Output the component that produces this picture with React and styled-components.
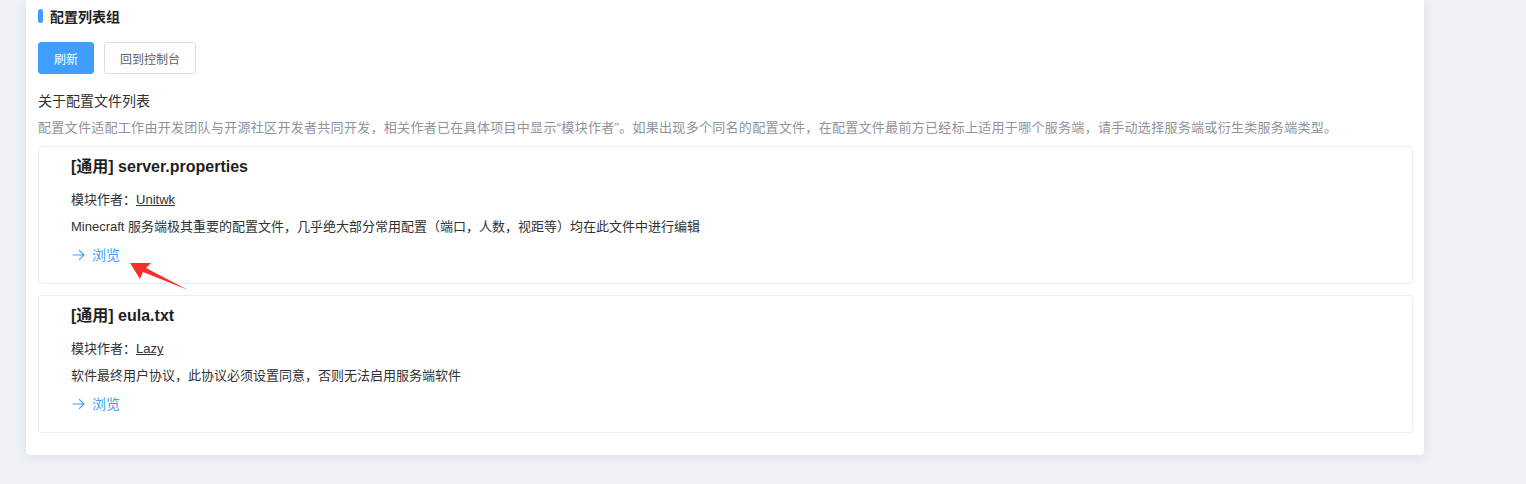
import React from 'react';
import styled, { createGlobalStyle } from 'styled-components';

const GlobalStyle = createGlobalStyle`
  html, body {
    margin: 0;
    padding: 0;
    background: #eef1f5;
    font-family: "Liberation Sans", "Noto Sans CJK SC", sans-serif;
    color: #303133;
  }
`;

const Page = styled.div`
  position: relative;
  width: 1526px;
  height: 484px;
  overflow: hidden;
`;

const Panel = styled.div`
  margin-left: 26px;
  width: 1398px;
  box-sizing: border-box;
  padding: 7px 11px 22px 12px;
  background: #fff;
  border-radius: 0 0 4px 4px;
  box-shadow: 0 2px 12px 0 rgba(0, 0, 0, 0.08);
`;

const Header = styled.div`
  display: flex;
  align-items: center;
  gap: 7px;
  height: 18px;
`;

const Bar = styled.span`
  width: 5px;
  height: 14px;
  border-radius: 3px;
  background: #409eff;
`;

const Title = styled.h3`
  margin: 0;
  font-size: 14px;
  font-weight: 700;
  color: #1f1f1f;
`;

const Toolbar = styled.div`
  display: flex;
  gap: 10px;
  margin-top: 17px;
`;

const Button = styled.button`
  height: 32px;
  padding: 0 15px;
  font-family: inherit;
  font-size: 12px;
  border-radius: 3px;
  cursor: pointer;
  border: 1px solid ${(p) => (p.primary ? '#409eff' : '#dcdfe6')};
  background: ${(p) => (p.primary ? '#409eff' : '#fff')};
  color: ${(p) => (p.primary ? '#fff' : '#606266')};
`;

const SubTitle = styled.div`
  margin-top: 17px;
  font-size: 14px;
  line-height: 20px;
  color: #303133;
`;

const Desc = styled.div`
  margin-top: 7px;
  font-size: 13px;
  letter-spacing: 0.3px;
  line-height: 20px;
  color: #909399;
  white-space: nowrap;
`;

const List = styled.div`
  display: flex;
  flex-direction: column;
  gap: 11px;
  margin-top: 8px;
`;

const Card = styled.div`
  border: 1px solid #ebeef5;
  border-radius: 4px;
  padding: 9px 20px 18px 32px;
`;

const CardTitle = styled.div`
  font-size: 16px;
  font-weight: 700;
  line-height: 22px;
  color: #1f1f1f;
`;

const Meta = styled.div`
  margin-top: ${(p) => p.gap}px;
  font-size: 13px;
  line-height: 20px;
  color: #303133;
`;

const Author = styled.a`
  color: #303133;
  text-decoration: underline;
`;

const Browse = styled.a`
  display: inline-flex;
  align-items: center;
  gap: 7px;
  margin-top: 8px;
  padding-left: 1px;
  font-size: 14px;
  line-height: 20px;
  color: #409eff;
  text-decoration: none;
  cursor: pointer;
`;

const Annotation = styled.svg`
  position: absolute;
  left: 0;
  top: 0;
  pointer-events: none;
`;

const files = [
  {
    name: '[通用] server.properties',
    author: 'Unitwk',
    desc: 'Minecraft 服务端极其重要的配置文件，几乎绝大部分常用配置（端口，人数，视距等）均在此文件中进行编辑',
  },
  {
    name: '[通用] eula.txt',
    author: 'Lazy',
    desc: '软件最终用户协议，此协议必须设置同意，否则无法启用服务端软件',
  },
];

const ArrowRight = () => (
  <svg width="13" height="12" viewBox="0 0 13 12" fill="none" stroke="#409eff" strokeWidth="1.1">
    <path d="M0.5 6H12M7 1.2L12 6L7 10.8" />
  </svg>
);

export default function App() {
  return (
    <Page>
      <GlobalStyle />
      <Panel>
        <Header>
          <Bar />
          <Title>配置列表组</Title>
        </Header>
        <Toolbar>
          <Button primary>刷新</Button>
          <Button>回到控制台</Button>
        </Toolbar>
        <SubTitle>关于配置文件列表</SubTitle>
        <Desc>
          配置文件适配工作由开发团队与开源社区开发者共同开发，相关作者已在具体项目中显示“模块作者”。如果出现多个同名的配置文件，在配置文件最前方已经标上适用于哪个服务端，请手动选择服务端或衍生类服务端类型。
        </Desc>
        <List>
          {files.map((f) => (
            <Card key={f.name}>
              <CardTitle>{f.name}</CardTitle>
              <Meta gap={12}>
                模块作者：<Author>{f.author}</Author>
              </Meta>
              <Meta gap={7}>{f.desc}</Meta>
              <Browse>
                <ArrowRight />
                浏览
              </Browse>
            </Card>
          ))}
        </List>
      </Panel>
      <Annotation width="1526" height="484">
        <polygon points="130,263 151,263 146,268 188,290 143,272 140,279" fill="#f5302b" />
      </Annotation>
    </Page>
  );
}
